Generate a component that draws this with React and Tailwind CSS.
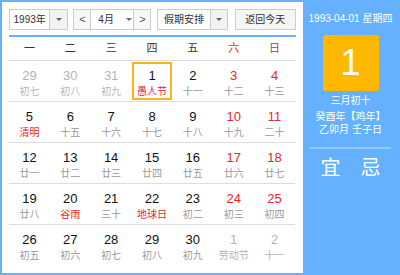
import React from "react";

const BLUE = "bg-[#65b1ff]";

const rows = [
  [
    { n: 29, l: "初七", o: 1 },
    { n: 30, l: "初八", o: 1 },
    { n: 31, l: "初九", o: 1 },
    { n: 1, l: "愚人节", f: 1, s: 1 },
    { n: 2, l: "十一" },
    { n: 3, l: "十二", w: 1 },
    { n: 4, l: "十三", w: 1 },
  ],
  [
    { n: 5, l: "清明", f: 1 },
    { n: 6, l: "十五" },
    { n: 7, l: "十六" },
    { n: 8, l: "十七" },
    { n: 9, l: "十八" },
    { n: 10, l: "十九", w: 1 },
    { n: 11, l: "二十", w: 1 },
  ],
  [
    { n: 12, l: "廿一" },
    { n: 13, l: "廿二" },
    { n: 14, l: "廿三" },
    { n: 15, l: "廿四" },
    { n: 16, l: "廿五" },
    { n: 17, l: "廿六", w: 1 },
    { n: 18, l: "廿七", w: 1 },
  ],
  [
    { n: 19, l: "廿八" },
    { n: 20, l: "谷雨", f: 1 },
    { n: 21, l: "三十" },
    { n: 22, l: "地球日", f: 1 },
    { n: 23, l: "初二" },
    { n: 24, l: "初三", w: 1 },
    { n: 25, l: "初四", w: 1 },
  ],
  [
    { n: 26, l: "初五" },
    { n: 27, l: "初六" },
    { n: 28, l: "初七" },
    { n: 29, l: "初八" },
    { n: 30, l: "初九" },
    { n: 1, l: "劳动节", o: 1 },
    { n: 2, l: "十一", o: 1 },
  ],
];

function Caret() {
  return (
    <span className="block w-0 h-0 border-l-[3px] border-r-[3px] border-t-[3px] border-l-transparent border-r-transparent border-t-[#666]" />
  );
}

function Cell({ c }) {
  const numColor = c.o ? "text-[#b3b3b3]" : c.w ? "text-[#e8262b]" : "text-[#111]";
  const lunColor = c.o ? "text-[#b3b3b3]" : c.f ? "text-[#e8262b]" : "text-[#999]";
  return (
    <div
      className={
        "h-full flex flex-col items-center " +
        (c.s ? "border-2 border-[#fbb414] pt-[4px]" : "pt-[6px]")
      }
    >
      <div className={"text-[13px] leading-[16px] " + numColor}>{c.n}</div>
      <div className={"mt-[2px] text-[10px] leading-[12px] whitespace-nowrap " + lunColor}>{c.l}</div>
    </div>
  );
}

export default function App() {
  return (
    <div
      className={"w-[400px] h-[275px] flex border-2 border-[#65b1ff] " + BLUE}
      style={{ fontFamily: '"Liberation Sans", "Noto Sans CJK SC", sans-serif' }}
    >
      {/* Left panel */}
      <div className="w-[301px] h-full bg-white pt-[7px] px-[7px]">
        {/* toolbar */}
        <div className="flex items-center h-[21px] text-[10px] text-[#333] whitespace-nowrap">
          <div className="flex h-full w-[60px] border border-[#ccc]">
            <div className="flex-1 flex items-center justify-center bg-white">1993年</div>
            <div className="w-[18px] border-l border-[#ccc] bg-[#f2f2f2] flex items-center justify-center">
              <Caret />
            </div>
          </div>
          <div className="ml-[5px] flex h-full w-[79px] border border-[#ccc]">
            <div className="w-[17px] border-r border-[#ccc] bg-[#f7f7f7] flex items-center justify-center text-[11px] text-[#555]">
              &lt;
            </div>
            <div className="flex-1 flex items-center bg-white pl-[7px]">
              <span>4月</span>
              <span className="ml-[12px]">
                <Caret />
              </span>
            </div>
            <div className="w-[17px] border-l border-[#ccc] bg-[#f7f7f7] flex items-center justify-center text-[11px] text-[#555]">
              &gt;
            </div>
          </div>
          <div className="ml-[6px] flex h-full w-[71px] border border-[#ccc]">
            <div className="flex-1 flex items-center justify-center bg-white">假期安排</div>
            <div className="w-[17px] border-l border-[#ccc] bg-[#f2f2f2] flex items-center justify-center">
              <Caret />
            </div>
          </div>
          <div className="ml-[7px] h-full w-[62px] border border-[#ccc] bg-[#f5f5f5] flex items-center justify-center">
            返回今天
          </div>
        </div>
        {/* blue line */}
        <div className={"mt-[5px] h-[2px] w-[287px] " + BLUE} />
        {/* weekday header */}
        <div className="w-[286px] grid grid-cols-7 h-[24px] items-center text-[11px] text-[#333] border-b border-[#ddd]">
          {["一", "二", "三", "四", "五", "六", "日"].map((d, i) => (
            <div key={d} className={"text-center " + (i >= 5 ? "text-[#e8262b]" : "")}>
              {d}
            </div>
          ))}
        </div>
        {/* rows */}
        {rows.map((r, ri) => (
          <div
            key={ri}
            className={
              "w-[286px] grid grid-cols-7 h-[41px] py-[1px] " +
              (ri < 4 ? "border-b border-[#ddd]" : "")
            }
          >
            {r.map((c, ci) => (
              <Cell key={ci} c={c} />
            ))}
          </div>
        ))}
      </div>
      {/* Right panel */}
      <div className="flex-1 flex flex-col items-center text-white whitespace-nowrap">
        <div className="mt-[11px] text-[10px] leading-[12px]">1993-04-01 星期四</div>
        <div className="mt-[10px] w-[56px] h-[56px] rounded-[2px] bg-[#ffb800] flex items-center justify-center text-[36px] leading-none">
          1
        </div>
        <div className="mt-[4px] text-[10px] leading-[12px]">三月初十</div>
        <div className="mt-[4px] text-[10px] leading-[12px]">癸酉年【鸡年】</div>
        <div className="mt-[1px] text-[10px] leading-[12px]">乙卯月 壬子日</div>
        <div className="mt-[11px] w-[81px] h-[2px] bg-white/30" />
        <div className="mt-[7px] w-full flex justify-center gap-[20px] text-[20px] leading-[24px]">
          <span>宜</span>
          <span>忌</span>
        </div>
      </div>
    </div>
  );
}
